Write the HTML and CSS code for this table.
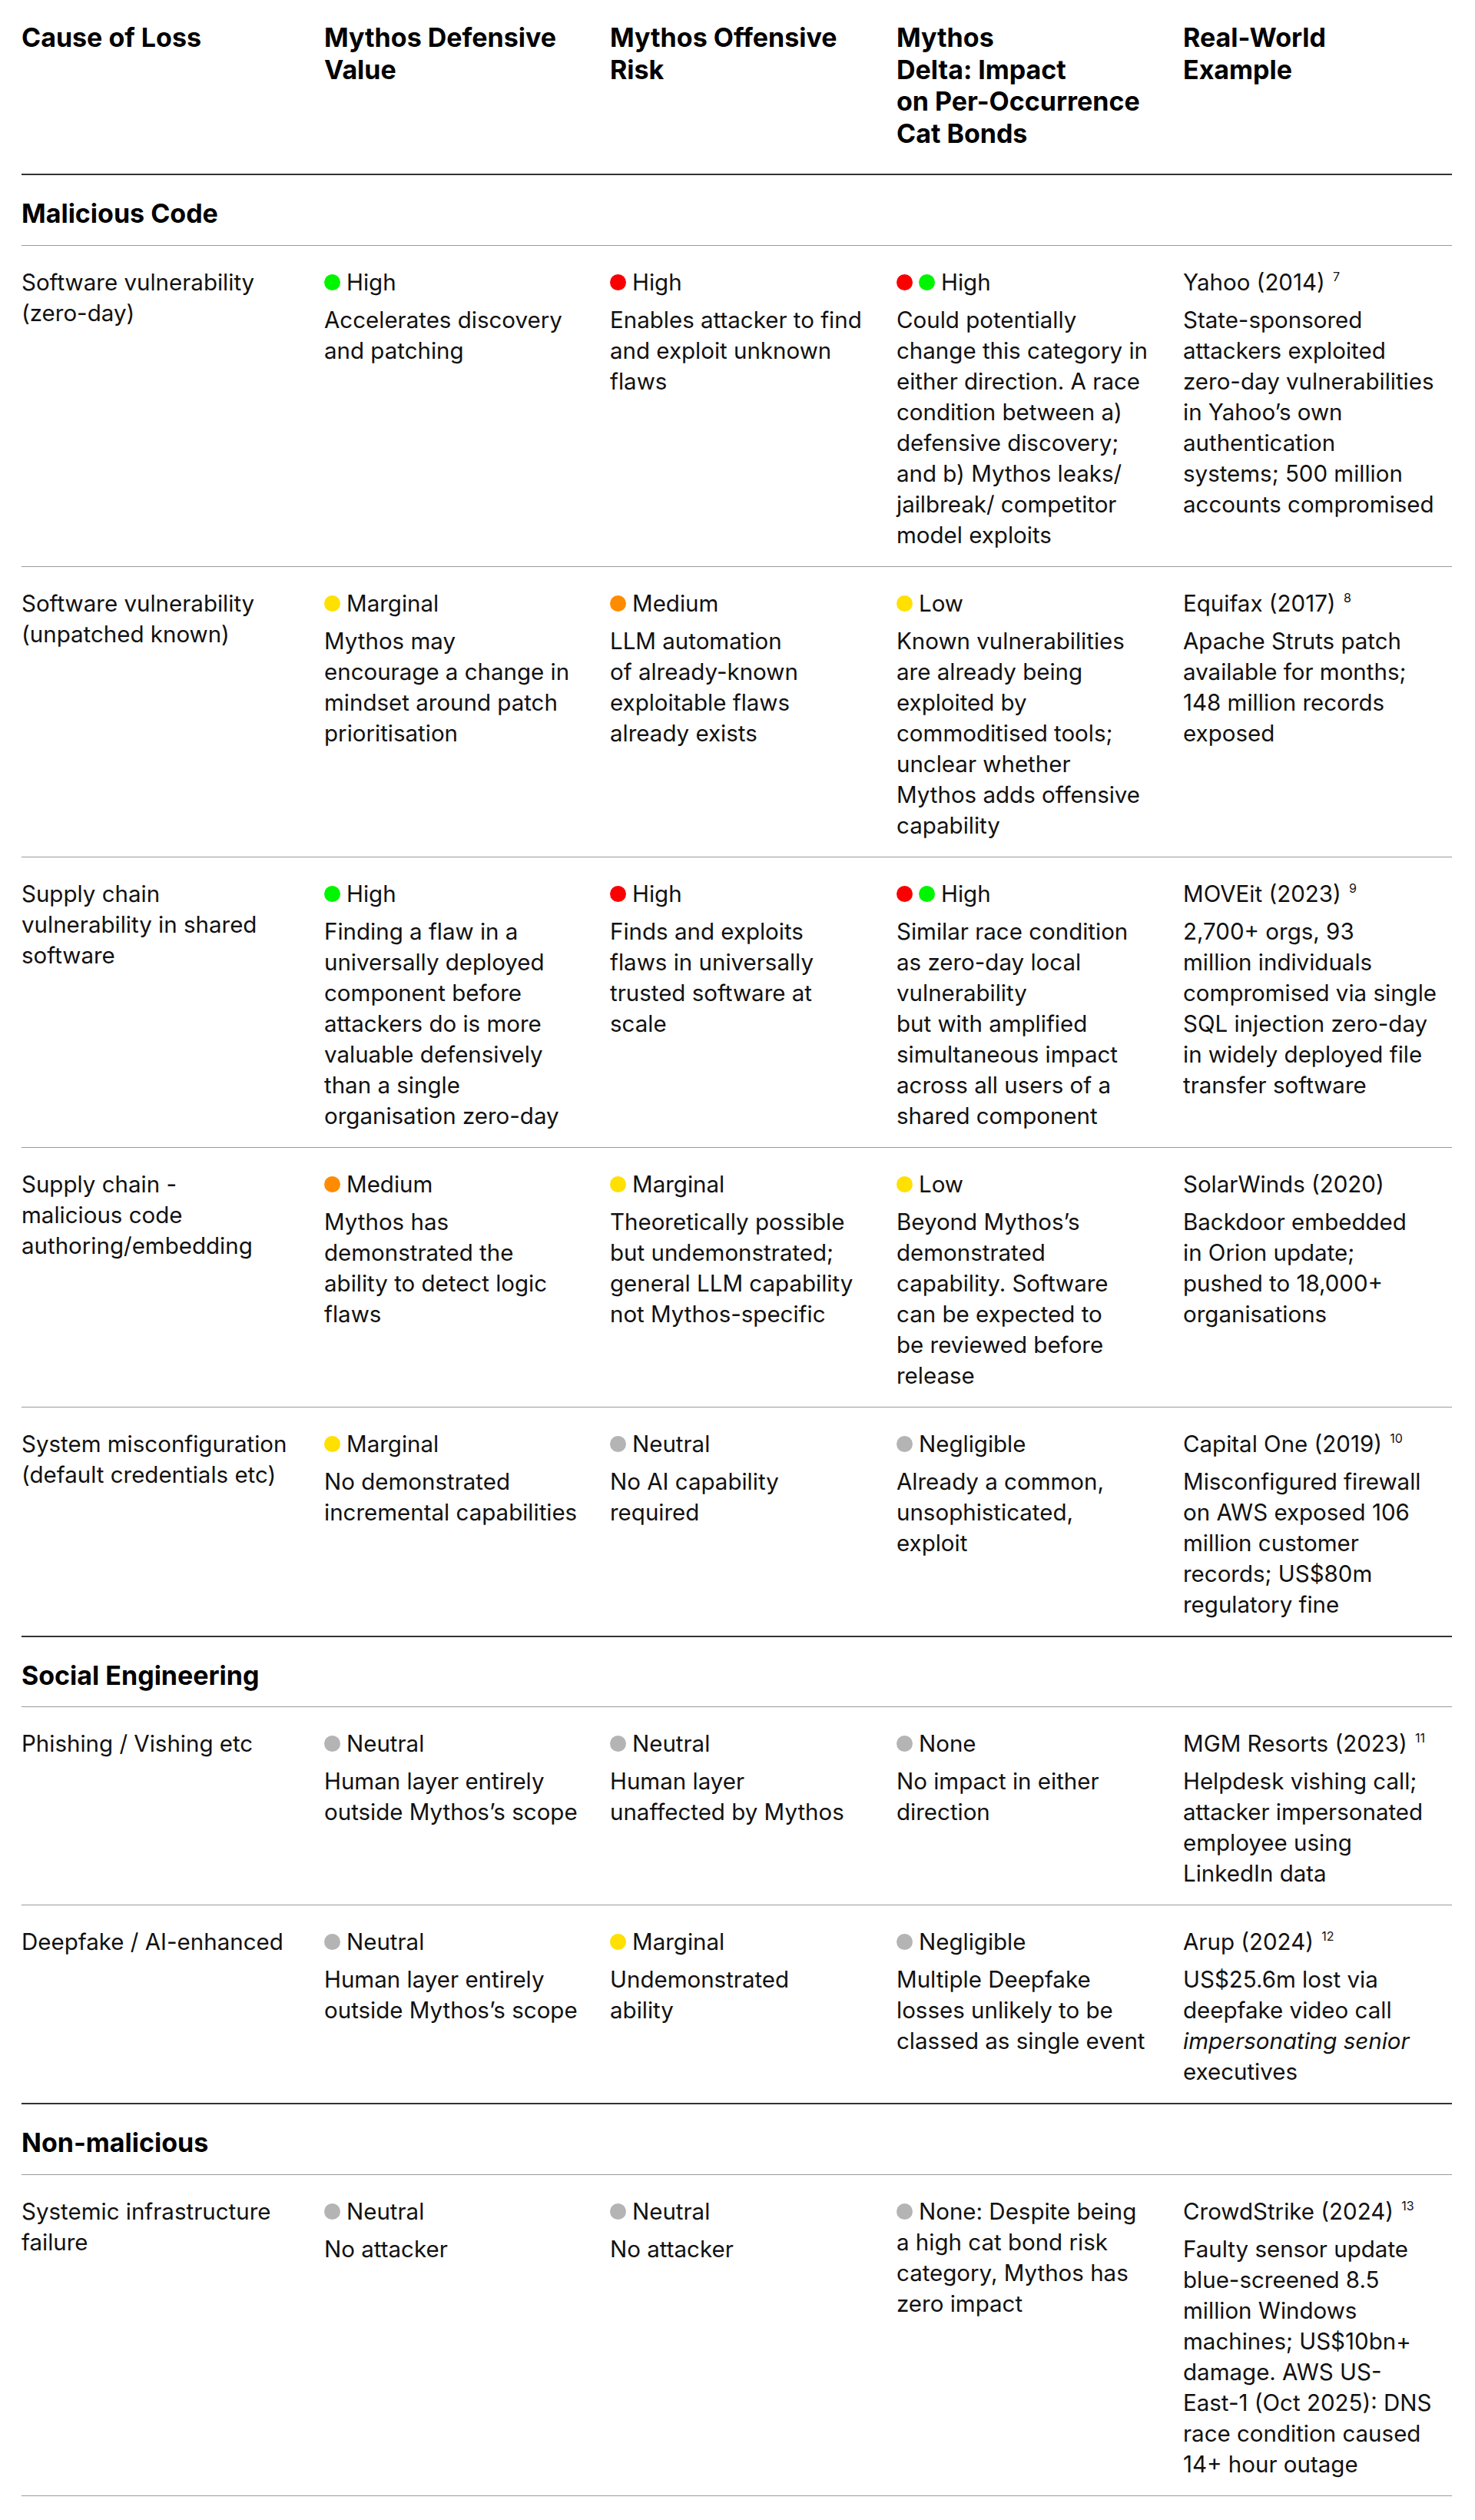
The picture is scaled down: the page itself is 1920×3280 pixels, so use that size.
FILE: index.html
```html
<!DOCTYPE html>
<html lang="en">
<head>
<meta charset="utf-8">
<title>Mythos and Cat Bonds</title>
<link rel="stylesheet" href="styles.css">
</head>
<body>
<table class="risk">
  <colgroup>
    <col class="c-cause">
    <col class="c-def">
    <col class="c-off">
    <col class="c-delta">
    <col class="c-example">
  </colgroup>
  <thead>
    <tr>
      <th>Cause of Loss</th>
      <th>Mythos Defensive<br>Value</th>
      <th>Mythos Offensive<br>Risk</th>
      <th>Mythos<br>Delta: Impact<br>on Per-Occurrence<br>Cat Bonds</th>
      <th>Real-World<br>Example</th>
    </tr>
  </thead>

  <tbody class="group">
    <tr class="section"><th colspan="5">Malicious Code</th></tr>
    <tr>
      <td>Software vulnerability<br>(zero-day)</td>
      <td><p class="rating"><span class="dot green"></span>High</p><p>Accelerates discovery<br>and patching</p></td>
      <td><p class="rating"><span class="dot red"></span>High</p><p>Enables attacker to find<br>and exploit unknown<br>flaws</p></td>
      <td><p class="rating"><span class="dot red"></span><span class="dot green"></span>High</p><p>Could potentially<br>change this category in<br>either direction. A race<br>condition between a)<br>defensive discovery;<br>and b) Mythos leaks/<br>jailbreak/ competitor<br>model exploits</p></td>
      <td><p class="rating">Yahoo (2014) <sup class="fn">7</sup></p><p>State-sponsored<br>attackers exploited<br>zero-day vulnerabilities<br>in Yahoo’s own<br>authentication<br>systems; 500 million<br>accounts compromised</p></td>
    </tr>
    <tr>
      <td>Software vulnerability<br>(unpatched known)</td>
      <td><p class="rating"><span class="dot yellow"></span>Marginal</p><p>Mythos may<br>encourage a change in<br>mindset around patch<br>prioritisation</p></td>
      <td><p class="rating"><span class="dot orange"></span>Medium</p><p>LLM automation<br>of already-known<br>exploitable flaws<br>already exists</p></td>
      <td><p class="rating"><span class="dot yellow"></span>Low</p><p>Known vulnerabilities<br>are already being<br>exploited by<br>commoditised tools;<br>unclear whether<br>Mythos adds offensive<br>capability</p></td>
      <td><p class="rating">Equifax (2017) <sup class="fn">8</sup></p><p>Apache Struts patch<br>available for months;<br>148 million records<br>exposed</p></td>
    </tr>
    <tr>
      <td>Supply chain<br>vulnerability in shared<br>software</td>
      <td><p class="rating"><span class="dot green"></span>High</p><p>Finding a flaw in a<br>universally deployed<br>component before<br>attackers do is more<br>valuable defensively<br>than a single<br>organisation zero-day</p></td>
      <td><p class="rating"><span class="dot red"></span>High</p><p>Finds and exploits<br>flaws in universally<br>trusted software at<br>scale</p></td>
      <td><p class="rating"><span class="dot red"></span><span class="dot green"></span>High</p><p>Similar race condition<br>as zero-day local<br>vulnerability<br>but with amplified<br>simultaneous impact<br>across all users of a<br>shared component</p></td>
      <td><p class="rating">MOVEit (2023) <sup class="fn">9</sup></p><p>2,700+ orgs, 93<br>million individuals<br>compromised via single<br>SQL injection zero-day<br>in widely deployed file<br>transfer software</p></td>
    </tr>
    <tr>
      <td>Supply chain -<br>malicious code<br>authoring/embedding</td>
      <td><p class="rating"><span class="dot orange"></span>Medium</p><p>Mythos has<br>demonstrated the<br>ability to detect logic<br>flaws</p></td>
      <td><p class="rating"><span class="dot yellow"></span>Marginal</p><p>Theoretically possible<br>but undemonstrated;<br>general LLM capability<br>not Mythos-specific</p></td>
      <td><p class="rating"><span class="dot yellow"></span>Low</p><p>Beyond Mythos’s<br>demonstrated<br>capability. Software<br>can be expected to<br>be reviewed before<br>release</p></td>
      <td><p class="rating">SolarWinds (2020)</p><p>Backdoor embedded<br>in Orion update;<br>pushed to 18,000+<br>organisations</p></td>
    </tr>
    <tr>
      <td>System misconfiguration<br>(default credentials etc)</td>
      <td><p class="rating"><span class="dot yellow"></span>Marginal</p><p>No demonstrated<br>incremental capabilities</p></td>
      <td><p class="rating"><span class="dot grey"></span>Neutral</p><p>No AI capability<br>required</p></td>
      <td><p class="rating"><span class="dot grey"></span>Negligible</p><p>Already a common,<br>unsophisticated,<br>exploit</p></td>
      <td><p class="rating">Capital One (2019) <sup class="fn">10</sup></p><p>Misconfigured firewall<br>on AWS exposed 106<br>million customer<br>records; US$80m<br>regulatory fine</p></td>
    </tr>
  </tbody>

  <tbody class="group">
    <tr class="section"><th colspan="5">Social Engineering</th></tr>
    <tr>
      <td>Phishing / Vishing etc</td>
      <td><p class="rating"><span class="dot grey"></span>Neutral</p><p>Human layer entirely<br>outside Mythos’s scope</p></td>
      <td><p class="rating"><span class="dot grey"></span>Neutral</p><p>Human layer<br>unaffected by Mythos</p></td>
      <td><p class="rating"><span class="dot grey"></span>None</p><p>No impact in either<br>direction</p></td>
      <td><p class="rating">MGM Resorts (2023) <sup class="fn">11</sup></p><p>Helpdesk vishing call;<br>attacker impersonated<br>employee using<br>LinkedIn data</p></td>
    </tr>
    <tr>
      <td>Deepfake / AI-enhanced</td>
      <td><p class="rating"><span class="dot grey"></span>Neutral</p><p>Human layer entirely<br>outside Mythos’s scope</p></td>
      <td><p class="rating"><span class="dot yellow"></span>Marginal</p><p>Undemonstrated<br>ability</p></td>
      <td><p class="rating"><span class="dot grey"></span>Negligible</p><p>Multiple Deepfake<br>losses unlikely to be<br>classed as single event</p></td>
      <td><p class="rating">Arup (2024) <sup class="fn">12</sup></p><p>US$25.6m lost via<br>deepfake video call<br><em>impersonating senior</em><br>executives</p></td>
    </tr>
  </tbody>

  <tbody class="group">
    <tr class="section"><th colspan="5">Non-malicious</th></tr>
    <tr class="last">
      <td>Systemic infrastructure<br>failure</td>
      <td><p class="rating"><span class="dot grey"></span>Neutral</p><p>No attacker</p></td>
      <td><p class="rating"><span class="dot grey"></span>Neutral</p><p>No attacker</p></td>
      <td><p><span class="dot grey"></span>None: Despite being<br>a high cat bond risk<br>category, Mythos has<br>zero impact</p></td>
      <td><p class="rating">CrowdStrike (2024) <sup class="fn">13</sup></p><p>Faulty sensor update<br>blue-screened 8.5<br>million Windows<br>machines; US$10bn+<br>damage. AWS US-<br>East-1 (Oct 2025): DNS<br>race condition caused<br>14+ hour outage</p></td>
    </tr>
  </tbody>
</table>
</body>
</html>
```
FILE: styles.css
```css
html, body {
  margin: 0;
  padding: 0;
  background: #ffffff;
}

body {
  font-family: "Inter", "Liberation Sans", sans-serif;
  color: #111111;
}

.risk {
  margin: 0 0 0 28px;
  width: 1862px;
  table-layout: fixed;
  border-collapse: separate;
  border-spacing: 0;
}

.c-cause { width: 394px; }
.c-def { width: 372px; }
.c-off { width: 373px; }
.c-delta { width: 373px; }
.c-example { width: 350px; }

.risk thead th {
  text-align: left;
  vertical-align: top;
  font-weight: 700;
  font-size: 34px;
  line-height: 41.5px;
  color: #000000;
  padding: 28px 22px 32px 0;
  border-bottom: 2px solid #333333;
}

.risk thead th:last-child,
.risk td:last-child {
  padding-right: 0;
}

.section th {
  text-align: left;
  font-weight: 700;
  font-size: 34px;
  line-height: 41.5px;
  color: #000000;
  padding: 29px 0 20px 0;
}

.group + .group .section th {
  border-top: 2px solid #333333;
}

.risk td {
  vertical-align: top;
  font-size: 29.5px;
  line-height: 40px;
  padding: 27px 22px 21px 0;
  border-top: 1px solid #9a9a9a;
}

.risk tr.last td {
  border-bottom: 1px solid #9a9a9a;
}

.risk td p {
  margin: 0;
}

.risk td p.rating {
  margin-bottom: 9px;
}

.dot {
  display: inline-block;
  width: 21px;
  height: 21px;
  border-radius: 50%;
  margin-right: 8px;
  vertical-align: baseline;
}

.green { background: #00f500; }
.red { background: #fa0000; }
.yellow { background: #ffe000; }
.orange { background: #ff8c00; }
.grey { background: #b4b4b4; }

.fn {
  font-size: 16px;
  line-height: 0;
  vertical-align: 12px;
  margin-left: 2px;
}

em {
  font-style: italic;
}
```
